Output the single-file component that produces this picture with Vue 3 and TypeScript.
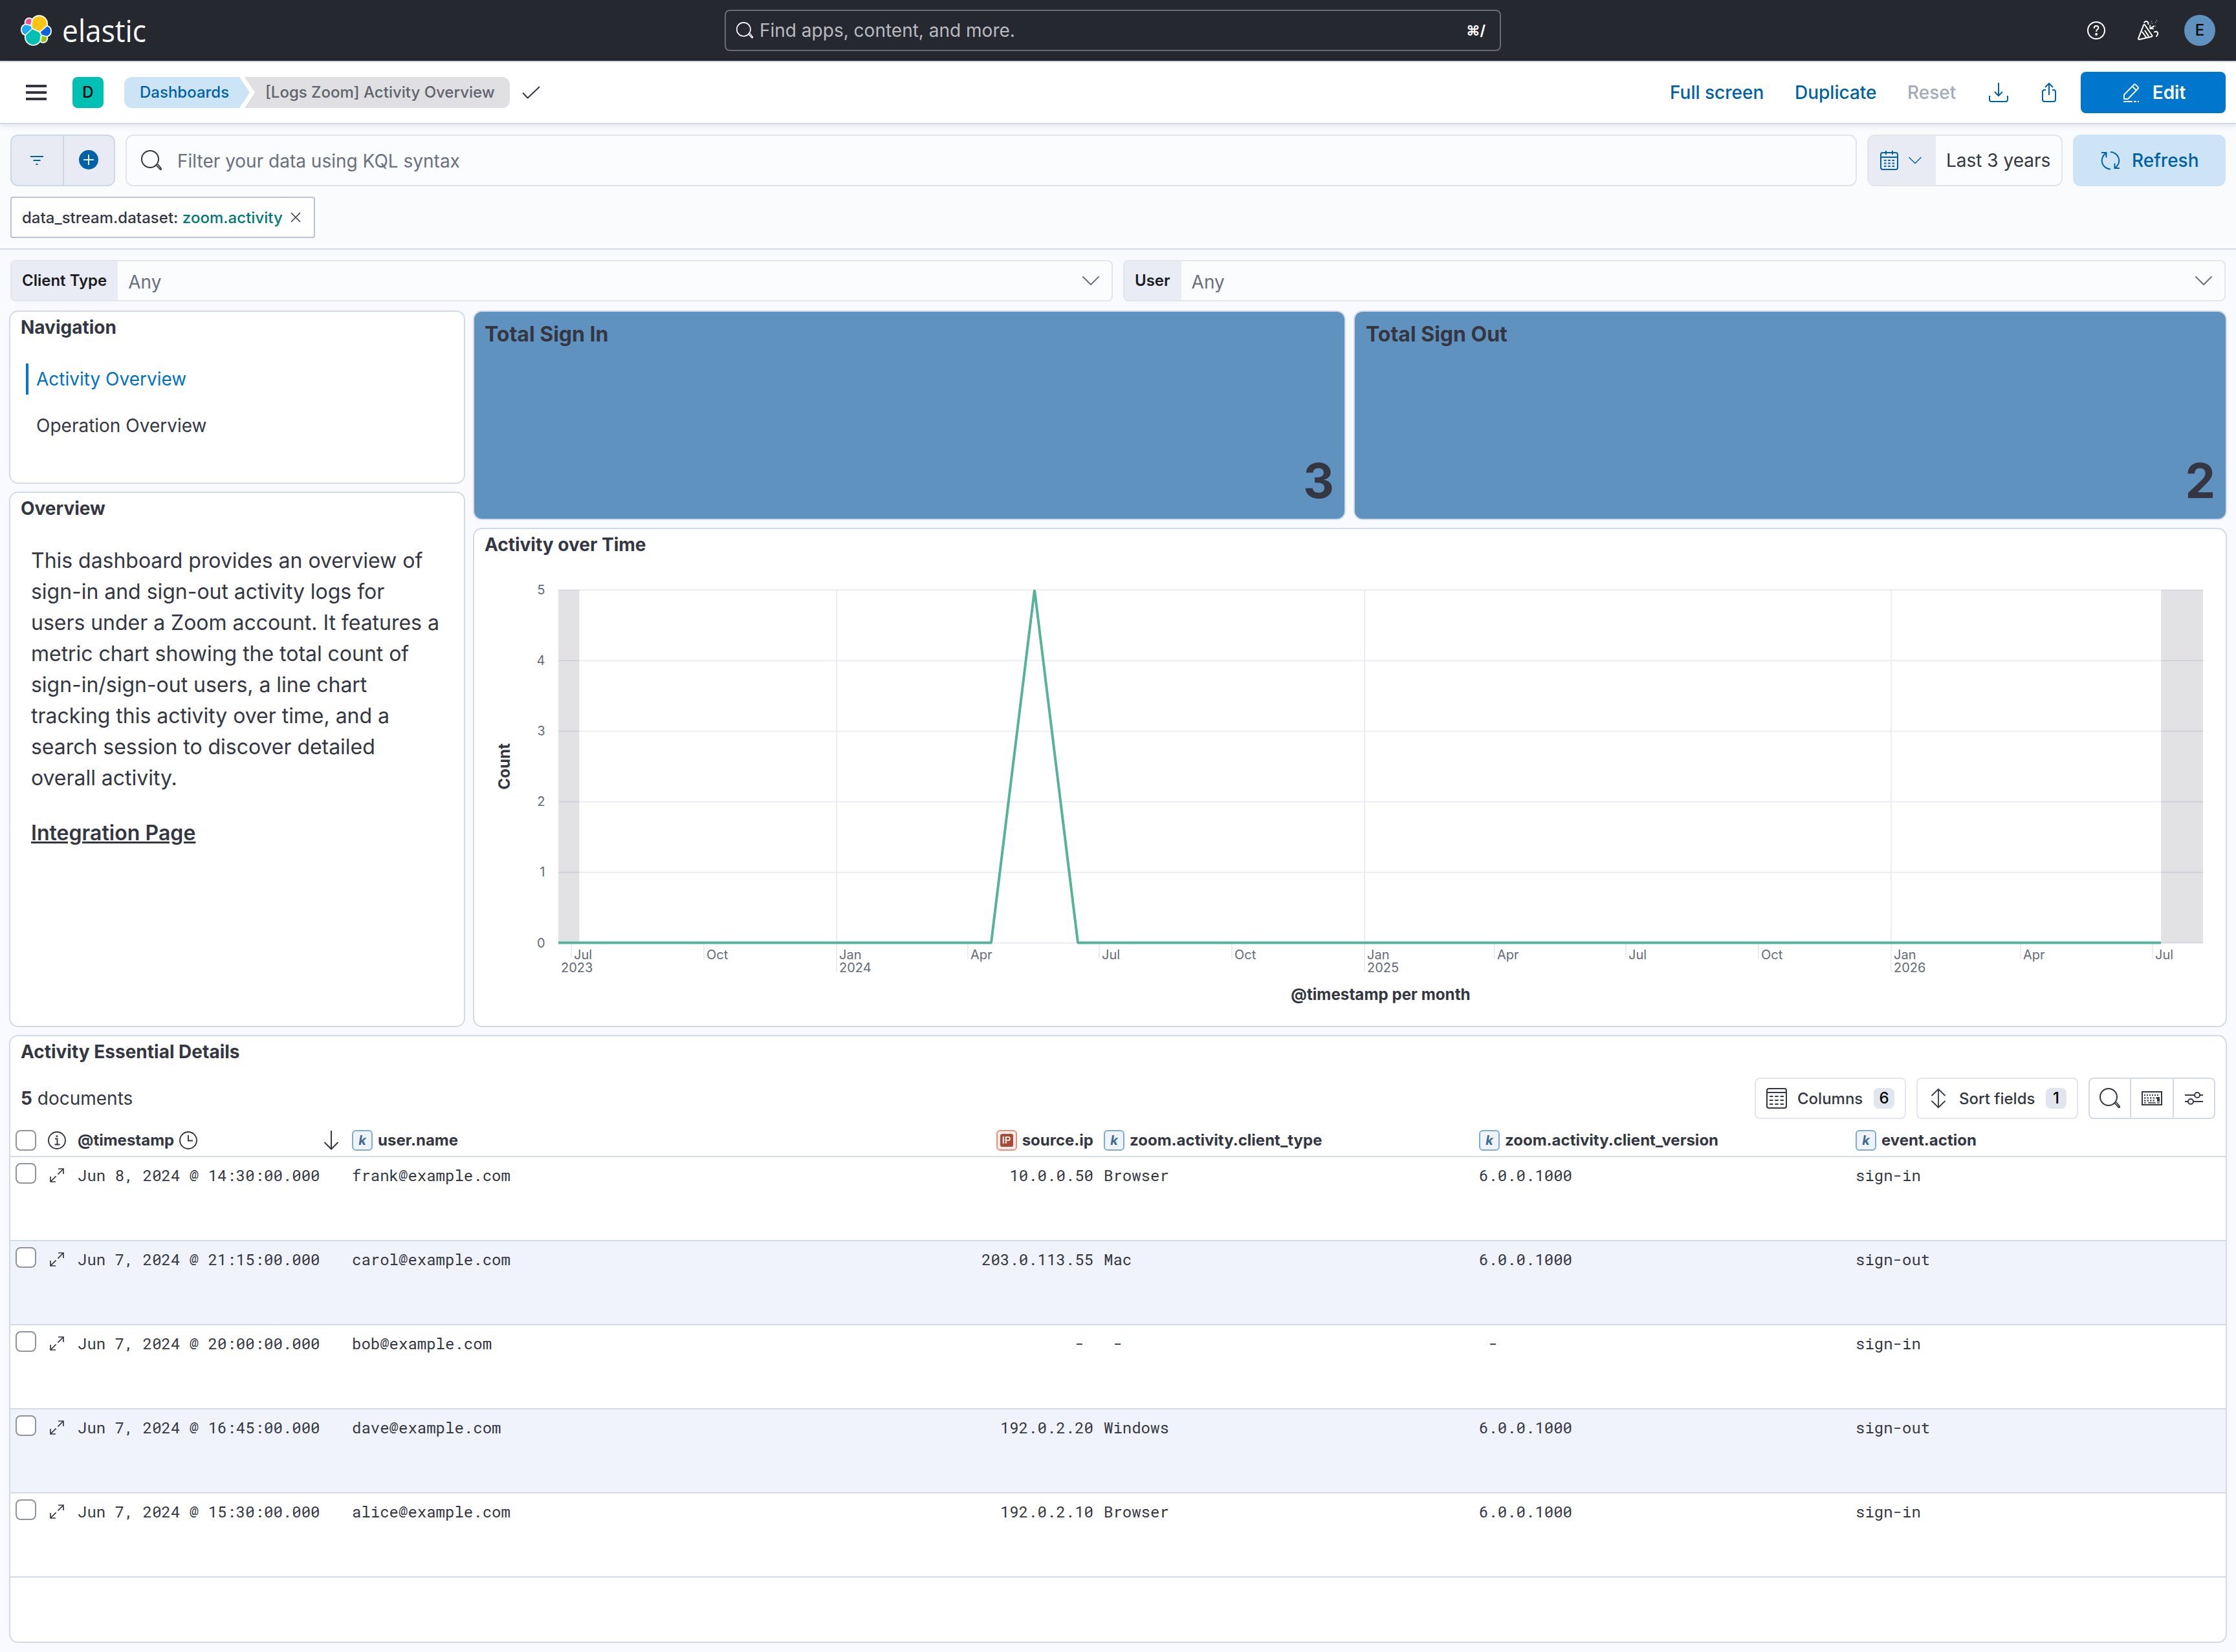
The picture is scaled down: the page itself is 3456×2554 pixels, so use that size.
<script setup lang="ts">
interface LogRow {
  timestamp: string
  user: string
  ip: string
  clientType: string
  version: string
  action: string
}

interface Tick {
  x: number
  label: string
  year?: string
  labelX?: number
}

const rows: LogRow[] = [
  { timestamp: 'Jun 8, 2024 @ 14:30:00.000', user: 'frank@example.com', ip: '10.0.0.50', clientType: 'Browser', version: '6.0.0.1000', action: 'sign-in' },
  { timestamp: 'Jun 7, 2024 @ 21:15:00.000', user: 'carol@example.com', ip: '203.0.113.55', clientType: 'Mac', version: '6.0.0.1000', action: 'sign-out' },
  { timestamp: 'Jun 7, 2024 @ 20:00:00.000', user: 'bob@example.com', ip: ' - ', clientType: ' - ', version: ' - ', action: 'sign-in' },
  { timestamp: 'Jun 7, 2024 @ 16:45:00.000', user: 'dave@example.com', ip: '192.0.2.20', clientType: 'Windows', version: '6.0.0.1000', action: 'sign-out' },
  { timestamp: 'Jun 7, 2024 @ 15:30:00.000', user: 'alice@example.com', ip: '192.0.2.10', clientType: 'Browser', version: '6.0.0.1000', action: 'sign-in' },
]

const ticks: Tick[] = [
  { x: 883, label: 'Jul', year: '2023', labelX: 867 },
  { x: 1088, label: 'Oct' },
  { x: 1293, label: 'Jan', year: '2024' },
  { x: 1496, label: 'Apr' },
  { x: 1699, label: 'Jul' },
  { x: 1904, label: 'Oct' },
  { x: 2109, label: 'Jan', year: '2025' },
  { x: 2310, label: 'Apr' },
  { x: 2513, label: 'Jul' },
  { x: 2718, label: 'Oct' },
  { x: 2923, label: 'Jan', year: '2026' },
  { x: 3123, label: 'Apr' },
  { x: 3327, label: 'Jul' },
]

const counts = [0, 1, 2, 3, 4, 5]
const countY = (n: number): number => 1458 - n * 109.2
</script>

<template>
  <div class="app">
    <svg class="defs" width="0" height="0">
      <defs>
        <symbol id="i-search" viewBox="0 0 32 32">
          <circle cx="14" cy="14" r="13" fill="none" stroke="currentColor" stroke-width="2" />
          <path d="M23.2 23.2l6.3 6.6a1 1 0 0 0 1.5-1.5l-5.2-6.6" fill="none" stroke="currentColor" stroke-width="1.8" />
        </symbol>
        <symbol id="i-down" viewBox="0 0 32 32">
          <path d="M4 10l12 12L28 10" fill="none" stroke="currentColor" stroke-width="2" stroke-linecap="round" stroke-linejoin="round" />
        </symbol>
        <symbol id="i-expand" viewBox="0 0 24 24">
          <path d="M14 2h8v8M22 2l-8.600 8.600M10 22H2v-8M2 22l8.600-8.600" fill="none" stroke="currentColor" stroke-width="1.700" />
        </symbol>
      </defs>
    </svg>

    <header class="top">
      <div class="brand">
        <svg class="logo" viewBox="0 0 32 32">
          <g stroke="#fff" stroke-width="2.500" stroke-linejoin="round" fill="#fff">
            <path d="M12.580 13.787l7.002 3.211 7.066-6.213a7.849 7.849 0 0 0 .152-1.557c0-4.287-3.465-7.774-7.724-7.774a7.710 7.710 0 0 0-6.373 3.380l-1.176 6.126z" />
            <path d="M5.333 21.228A8.030 8.030 0 0 0 5.180 22.800c0 4.302 3.476 7.800 7.749 7.800 2.571 0 4.976-1.279 6.417-3.422l1.166-6.102-1.556-2.993-7.030-3.221z" />
            <path d="M5.288 9.067l4.800 1.140L11.140 4.724a3.785 3.785 0 0 0-2.295-.775 3.800 3.800 0 0 0-3.780 3.813c0 .450.077.888.223 1.305z" />
            <path d="M4.872 10.214c-2.143.713-3.598 2.789-3.598 5.060 0 2.211 1.360 4.185 3.400 4.967l6.735-6.120-1.236-2.658z" />
            <path d="M20.873 27.178a3.764 3.764 0 0 0 2.288.781 3.800 3.800 0 0 0 3.780-3.813c0-.450-.077-.888-.223-1.304l-4.795-1.128z" />
            <path d="M21.848 20.563l5.280 1.242c2.144-.713 3.599-2.789 3.599-5.060a5.325 5.325 0 0 0-3.400-4.956l-6.905 6.086z" />
          </g>
          <path fill="#FEC514" d="M12.580 13.787l7.002 3.211 7.066-6.213a7.849 7.849 0 0 0 .152-1.557c0-4.287-3.465-7.774-7.724-7.774a7.710 7.710 0 0 0-6.373 3.380l-1.176 6.126z" />
          <path fill="#00BFB3" d="M5.333 21.228A8.030 8.030 0 0 0 5.180 22.800c0 4.302 3.476 7.800 7.749 7.800 2.571 0 4.976-1.279 6.417-3.422l1.166-6.102-1.556-2.993-7.030-3.221z" />
          <path fill="#F04E98" d="M5.288 9.067l4.800 1.140L11.140 4.724a3.785 3.785 0 0 0-2.295-.775 3.800 3.800 0 0 0-3.780 3.813c0 .450.077.888.223 1.305z" />
          <path fill="#1BA9F5" d="M4.872 10.214c-2.143.713-3.598 2.789-3.598 5.060 0 2.211 1.360 4.185 3.400 4.967l6.735-6.120-1.236-2.658z" />
          <path fill="#93C90E" d="M20.873 27.178a3.764 3.764 0 0 0 2.288.781 3.800 3.800 0 0 0 3.780-3.813c0-.450-.077-.888-.223-1.304l-4.795-1.128z" />
          <path fill="#0B64DD" d="M21.848 20.563l5.280 1.242c2.144-.713 3.599-2.789 3.599-5.060a5.325 5.325 0 0 0-3.400-4.956l-6.905 6.086z" />
        </svg>
        <svg class="wordmark" viewBox="0 0 140 94">
          <text x="0" y="65" textLength="130" lengthAdjust="spacingAndGlyphs" font-family="'Open Sans', sans-serif" font-size="47" fill="#fff">elastic</text>
        </svg>
      </div>
      <div class="search">
        <svg class="s-ico"><use href="#i-search" /></svg>
        <span class="s-ph">Find apps, content, and more.</span>
        <span class="s-key">⌘/</span>
      </div>
      <div class="top-right">
        <svg class="help" viewBox="0 0 32 32" fill="none" stroke="#fff" stroke-width="2">
          <circle cx="16" cy="16" r="13" />
          <path d="M12.800 13v-.800c0-2 1.400-3.200 3.300-3.200s3.300 1.200 3.300 3c0 2.600-3.300 2.600-3.300 5.400v.600" />
          <circle cx="16.100" cy="22" r="1" fill="#fff" />
        </svg>
        <svg class="party" viewBox="0 0 32 32" fill="none" stroke="#fff" stroke-width="2" stroke-linecap="round" stroke-linejoin="round">
          <path d="M9.200 7.600L1.200 28.200q-.500 1.800 1.500 1.800l18.600-4.300q2-.800.700-2.200L11.300 7.800q-1.200-1.400-2.100-.200z" />
          <path d="M7.200 18.500l5.800 8M11.400 16.500l5.400 8.500" />
          <path d="M10.200 3.800q1.300-2.200 3.400-1.800 3.400 1 2.800 4.400" />
          <path d="M19.200 8.500v4.800h5M19.800 12.600l5.500-3.200" stroke-width="1.800" />
          <path d="M26 18.500q3.200-1.600 4.800.600 1.200 3-1.800 6" />
          <path d="M21.500 2.200v.1M27.500 3.500v.1M29.500 1v.1M27.800 9.200v.1M22.300 5.200v.1" stroke-width="1.500" opacity="0.700" />
        </svg>
        <span class="avatar">E</span>
      </div>
    </header>

    <nav class="bar">
      <svg class="burger" viewBox="0 0 32 24"><path d="M0 0h32v4H0zM0 10h32v4H0zM0 20h32v4H0z" fill="#343741" /></svg>
      <span class="space">D</span>
      <div class="crumbs">
        <span class="crumb first">Dashboards</span>
        <span class="crumb last">[Logs Zoom] Activity Overview</span>
      </div>
      <svg class="check" viewBox="0 0 32 32"><path d="M3.500 17l7 7.500L28.500 7.500" fill="none" stroke="#343741" stroke-width="2" stroke-linecap="round" stroke-linejoin="round" /></svg>
      <div class="actions">
        <span class="act a1">Full screen</span>
        <span class="act a2">Duplicate</span>
        <span class="act a3">Reset</span>
        <svg class="dl" viewBox="0 0 32 32" fill="none" stroke="#0061a6" stroke-width="2">
          <path d="M16 1v20M10 15l6 6 6-6M2 21v6q0 3 3 3h22q3 0 3-3v-6" />
        </svg>
        <svg class="share" viewBox="0 0 32 32" fill="none" stroke="#0061a6" stroke-width="2">
          <path d="M16 20V2M10 8l6-6 6 6M11 12H9q-3 0-3 3v12q0 3 3 3h14q3 0 3-3V15q0-3-3-3h-2" />
        </svg>
        <span class="edit">
          <svg viewBox="0 0 32 32" fill="none" stroke="#fff" stroke-width="1.900">
            <path d="M5 26v-6.500L20.300 3.800q1.200-1 2.400 0l3.800 3.800q1 1.200 0 2.400L11 26z" stroke-linejoin="round" />
            <path d="M17.800 6.500l6.200 6.200" />
            <path d="M4 30h14M20 30h4M26 30h2" stroke-width="2" />
          </svg>
          Edit
        </span>
      </div>
    </nav>

    <section class="query">
      <div class="q-row">
        <div class="filters">
          <span class="f-btn"><svg viewBox="0 0 32 32"><path d="M6 11h20M10.500 17h11M14.500 23h3" stroke="#0061a6" stroke-width="2.200" /></svg></span>
          <span class="f-btn"><svg viewBox="0 0 32 32"><circle cx="16" cy="16" r="15" fill="#0061a6" /><path d="M16 8v16M8 16h16" stroke="#e9ebf4" stroke-width="2" /></svg></span>
        </div>
        <div class="kql">
          <svg class="k-ico"><use href="#i-search" /></svg>
          <span>Filter your data using KQL syntax</span>
        </div>
        <div class="date">
          <div class="cal">
            <svg viewBox="0 0 32 32" fill="none" stroke="#0061a6" stroke-width="2">
              <rect x="3" y="4" width="26" height="26" rx="3" /><path d="M3 11h26M11 1v6M21 1v6" />
              <path d="M8 16h16M8 20.500h16M8 25h16" stroke-dasharray="3.500 2.750" stroke-width="2.200" />
            </svg>
            <svg class="cv"><use href="#i-down" /></svg>
          </div>
          <span class="d-text">Last 3 years</span>
        </div>
        <div class="refresh">
          <svg viewBox="0 0 32 32" fill="none" stroke="#0061a6" stroke-width="2">
            <path d="M16 29.500A13.300 13.300 0 0 1 8.300 5.400M2 4h7.500v7.500M16 3A13.300 13.300 0 0 1 23.800 27M30 28h-7.500v-7.500" />
          </svg>
          <span>Refresh</span>
        </div>
      </div>
      <div class="pill">
        <span>data_stream.dataset: <b>zoom.activity</b></span>
        <svg viewBox="0 0 16 16"><path d="M1 1l14 14M15 1L1 15" stroke="#343741" stroke-width="1.500" /></svg>
      </div>
    </section>

    <section class="controls">
      <div class="control">
        <span class="c-label">Client Type</span><span class="c-any">Any</span>
        <svg><use href="#i-down" /></svg>
      </div>
      <div class="control">
        <span class="c-label">User</span><span class="c-any">Any</span>
        <svg><use href="#i-down" /></svg>
      </div>
    </section>

    <main class="board">
      <div class="left">
        <article class="panel nav-panel">
          <h2>Navigation</h2>
          <a class="link active">Activity Overview</a>
          <a class="link">Operation Overview</a>
        </article>
        <article class="panel overview">
          <h2>Overview</h2>
          <p>This dashboard provides an overview of<br />sign-in and sign-out activity logs for<br />users under a Zoom account. It features a<br />metric chart showing the total count of<br />sign-in/sign-out users, a line chart<br />tracking this activity over time, and a<br />search session to discover detailed<br />overall activity.</p>
          <a class="integration">Integration Page</a>
        </article>
      </div>

      <article class="panel metric">
        <h3>Total Sign In</h3>
        <strong>3</strong>
      </article>
      <article class="panel metric">
        <h3>Total Sign Out</h3>
        <strong>2</strong>
      </article>

      <article class="panel chart">
        <h2>Activity over Time</h2>
        <svg class="plot" viewBox="733 880 2707 706">
          <g stroke="#eaedf3" stroke-width="2">
            <line v-for="n in counts" :key="n" x1="863" x2="3405" :y1="countY(n)" :y2="countY(n)" />
            <template v-for="t in ticks" :key="t.x">
              <line :x1="t.x" :x2="t.x" :y1="t.year && !t.labelX ? 912 : 1458" :y2="t.year && !t.labelX ? 1502 : 1482" />
            </template>
          </g>
          <rect x="863" y="912" width="32.500" height="546" fill="#3a3f52" opacity="0.150" />
          <rect x="3340" y="912" width="65" height="546" fill="#3a3f52" opacity="0.150" />
          <polyline points="863,1457.500 1532,1457.500 1599,912 1666,1457.500 3340,1457.500" fill="none" stroke="#54b399" stroke-width="4" stroke-linejoin="bevel" />
          <g font-size="20" fill="#646a77">
            <text v-for="n in counts" :key="n" x="842.500" :y="countY(n) + 6.500" text-anchor="end">{{ n }}</text>
            <template v-for="t in ticks" :key="t.x">
              <text :x="t.x + 4" y="1482.500">{{ t.label }}</text>
              <text v-if="t.year" :x="t.labelX ?? t.x + 4" y="1502.500">{{ t.year }}</text>
            </template>
          </g>
          <g font-size="24.200" font-weight="700" fill="#343741" text-anchor="middle">
            <text transform="translate(788 1185) rotate(-90)">Count</text>
            <text x="2134" y="1545.500">@timestamp per month</text>
          </g>
        </svg>
      </article>

      <article class="panel details">
        <h2>Activity Essential Details</h2>
        <div class="tools">
          <span class="docs"><b>5</b> documents</span>
          <span class="btn cols">
            <svg viewBox="0 0 32 32" fill="none" stroke="#343741" stroke-width="2">
              <rect x="1" y="1" width="30" height="30" rx="3" /><path d="M1 7h30" />
              <path d="M5 13h22M5 19h22M5 25h22" stroke-dasharray="5.500 2.750" />
            </svg>
            <span>Columns</span><i>6</i>
          </span>
          <span class="btn sort">
            <svg viewBox="0 0 32 32" fill="none" stroke="#343741" stroke-width="1.800">
              <path d="M16 2v28M5.500 12L16 1.800 26.500 12M5.500 20L16 30.200 26.500 20" />
            </svg>
            <span>Sort fields</span><i>1</i>
          </span>
          <span class="group">
            <span><svg><use href="#i-search" /></svg></span>
            <span>
              <svg viewBox="0 0 32 32" fill="none" stroke="#343741" stroke-width="2">
                <rect x="1" y="6" width="30" height="20" /><path d="M4 11h24" stroke-dasharray="2 2" /><path d="M4 15.500h20" stroke-dasharray="2.500 2" /><path d="M4 19.500h18" stroke-dasharray="2.500 2" /><path d="M26 14v7" stroke-width="4" /><path d="M4 23h3M10 23h12M24 23h4" stroke-width="1.500" />
              </svg>
            </span>
            <span>
              <svg viewBox="0 0 32 32" fill="none" stroke="#343741" stroke-width="2">
                <path d="M2 11h15M25 11h5M2 21h5M15 21h15" /><circle cx="21" cy="11" r="4" /><circle cx="11" cy="21" r="4" />
              </svg>
            </span>
          </span>
        </div>
        <div class="row head">
          <span class="box"></span>
          <svg class="info" viewBox="0 0 28 28" fill="none" stroke="#343741" stroke-width="1.900"><circle cx="14" cy="14" r="13" /><path d="M11 11.500h3.500V20M10.500 20.500h8" /><circle cx="14" cy="7.500" r=".6" /></svg>
          <span class="cell ts">@timestamp
            <svg viewBox="0 0 28 28" fill="none" stroke="#343741" stroke-width="1.900"><circle cx="14" cy="14" r="13" /><path d="M14 6v8.500h7" /></svg>
            <svg class="arrow" viewBox="0 0 24 30" fill="none" stroke="#343741" stroke-width="2"><path d="M12 0v28M1.500 18L12 28.500 22.500 18" /></svg>
          </span>
          <span class="cell"><em>k</em>user.name</span>
          <span class="cell ip"><em class="red"><u>IP</u></em>source.ip</span>
          <span class="cell"><em>k</em>zoom.activity.client_type</span>
          <span class="cell"><em>k</em>zoom.activity.client_version</span>
          <span class="cell"><em>k</em>event.action</span>
        </div>
        <div v-for="row in rows" :key="row.timestamp" class="row data">
          <span class="box"></span>
          <svg class="exp"><use href="#i-expand" /></svg>
          <span class="val">{{ row.timestamp }}</span>
          <span class="val">{{ row.user }}</span>
          <span class="val ip">{{ row.ip }}</span>
          <span class="val">{{ row.clientType }}</span>
          <span class="val">{{ row.version }}</span>
          <span class="val">{{ row.action }}</span>
        </div>
      </article>
    </main>
  </div>
</template>

<style>
body {
  background: #f8faff;
}
</style>

<style scoped>
.app,
.app * {
  box-sizing: border-box;
}
.app {
  width: 3456px;
  height: 2554px;
  overflow: hidden;
  font-family: Inter, 'Liberation Sans', sans-serif;
  font-size: 28px;
  color: #343741;
  background: #f8faff;
  white-space: nowrap;
}
.defs {
  display: block;
}
svg {
  flex: none;
}

/* top header */
.top {
  display: grid;
  grid-template-columns: 1120px 1200px 1fr;
  align-items: center;
  height: 96px;
  background: #25282f;
  border-bottom: 2px solid #d3dae6;
}
.brand {
  display: flex;
  align-items: center;
  padding-left: 32px;
}
.logo {
  width: 48px;
  height: 48px;
}
.wordmark {
  width: 140px;
  height: 94px;
  margin-left: 16px;
}
.search {
  display: flex;
  align-items: center;
  height: 64px;
  padding: 0 22px 0 16px;
  border: 2px solid #6a6c72;
  border-radius: 8px;
  color: #b9bbc0;
}
.s-ico {
  width: 26px;
  height: 26px;
  color: #fff;
}
.s-ph {
  flex: 1;
  margin-left: 10px;
}
.s-key {
  font-size: 22px;
  font-weight: 700;
  color: #fff;
}
.top-right {
  display: flex;
  align-items: center;
  justify-content: flex-end;
  padding-right: 32px;
}
.help {
  width: 32px;
  height: 32px;
}
.party {
  width: 32px;
  height: 32px;
  margin: 0 40px 0 48px;
}
.avatar {
  width: 48px;
  height: 48px;
  border-radius: 50%;
  background: #6092c0;
  color: #000;
  font-size: 24px;
  font-weight: 500;
  line-height: 48px;
  text-align: center;
}

/* navigation bar */
.bar {
  position: relative;
  display: flex;
  align-items: center;
  height: 96px;
  padding: 0 16px 0 40px;
  background: #fff;
  border-bottom: 2px solid #d3dae6;
  box-shadow: 0 2px 8px rgba(60, 70, 90, 0.14);
}
.burger {
  width: 32px;
  height: 24px;
}
.space {
  width: 48px;
  height: 48px;
  margin-left: 40px;
  border-radius: 8px;
  background: #00bfb3;
  color: #000;
  font-size: 24px;
  font-weight: 500;
  line-height: 48px;
  text-align: center;
}
.crumbs {
  display: flex;
  margin-left: 32px;
}
.crumb {
  height: 48px;
  font-size: 24px;
  font-weight: 500;
  line-height: 48px;
}
.first {
  width: 194px;
  padding-left: 24px;
  border-radius: 12px 0 0 12px;
  background: #cce4f5;
  color: #0061a6;
  clip-path: polygon(0 0, 178px 0, 100% 50%, 178px 100%, 0 100%);
}
.last {
  width: 410px;
  margin-left: -8px;
  padding-left: 32px;
  border-radius: 0 12px 12px 0;
  background: #e0e0e3;
  color: #5f636d;
  clip-path: polygon(0 0, 100% 0, 100% 100%, 0 100%, 16px 50%);
}
.check {
  width: 32px;
  height: 32px;
  margin-left: 17px;
}
.actions {
  display: flex;
  flex: 1;
  align-items: center;
  justify-content: flex-end;
}
.act {
  font-weight: 500;
  color: #0061a6;
}
.a1 {
  width: 193px;
}
.a2 {
  width: 174px;
}
.a3 {
  width: 125px;
  color: #a2abba;
}
.dl {
  width: 32px;
  height: 32px;
}
.share {
  width: 32px;
  height: 32px;
  margin: 0 33px 0 46px;
}
.edit {
  display: flex;
  align-items: center;
  justify-content: center;
  gap: 17px;
  width: 224px;
  height: 64px;
  border-radius: 8px;
  background: #0077cc;
  color: #fff;
  font-weight: 600;
}
.edit svg {
  width: 32px;
  height: 32px;
}

/* query bar */
.query {
  height: 194px;
  padding: 16px 16px 0;
  background: #fafbfd;
  border-bottom: 2px solid #d3dae6;
}
.q-row {
  display: flex;
  height: 80px;
}
.filters {
  display: grid;
  grid-template-columns: 79px 1fr;
  width: 162px;
  border: 2px solid #d0d8e8;
  border-radius: 12px;
  background: #e9ebf4;
}
.f-btn {
  display: flex;
  align-items: center;
  justify-content: center;
  padding-right: 2px;
}
.f-btn + .f-btn {
  border-left: 2px solid #d0d8e8;
}
.f-btn svg {
  width: 32px;
  height: 32px;
  margin-top: -2px;
}
.kql {
  display: flex;
  align-items: center;
  width: 2676px;
  margin-left: 16px;
  padding-left: 22px;
  border: 2px solid #e3e5e9;
  border-radius: 12px;
  background: #fbfcfd;
  color: #69707d;
}
.kql span {
  margin-top: 2px;
}
.k-ico {
  width: 32px;
  height: 32px;
  margin-right: 24px;
  color: #343741;
}
.date {
  display: flex;
  width: 302px;
  margin-left: 16px;
  border: 2px solid #e3e5e9;
  border-radius: 12px;
  background: #fbfcfd;
  overflow: hidden;
}
.cal {
  display: flex;
  align-items: center;
  width: 104px;
  padding-left: 16px;
  background: #e9ebf4;
}
.cal svg {
  width: 32px;
  height: 32px;
}
.cal .cv {
  width: 24px;
  height: 24px;
  margin-left: 12px;
  color: #0061a6;
}
.d-text {
  padding-left: 16px;
  line-height: 76px;
}
.refresh {
  display: flex;
  align-items: center;
  width: 236px;
  margin-left: 16px;
  padding-left: 42px;
  border-radius: 12px;
  background: #cce4f5;
  color: #0061a6;
  font-weight: 500;
}
.refresh svg {
  width: 32px;
  height: 32px;
  margin-right: 17px;
}
.pill {
  display: flex;
  align-items: center;
  width: 471px;
  height: 64px;
  margin-top: 16px;
  padding-left: 16px;
  border: 2px solid #bcc4d3;
  border-radius: 4px;
  background: #fff;
  font-size: 24px;
  font-weight: 500;
  letter-spacing: 0.03px;
}
.pill span {
  width: 415px;
}
.pill b {
  font-weight: 500;
  color: #007871;
}
.pill svg {
  width: 16px;
  height: 16px;
}

/* controls */
.controls {
  display: flex;
  gap: 16px;
  padding: 16px 16px 14px;
}
.control {
  display: flex;
  align-items: center;
  flex: 1;
  height: 64px;
  padding-right: 16px;
  border: 2px solid #e3e6ea;
  border-radius: 8px;
  background: #fbfcfd;
  overflow: hidden;
}
.c-label {
  height: 60px;
  padding: 0 17px 0 16px;
  background: #e9ecf4;
  color: #1a1c21;
  font-size: 24px;
  font-weight: 600;
  line-height: 60px;
}
.c-any {
  flex: 1;
  margin-top: 4px;
  padding-left: 16px;
  color: #69707d;
}
.control svg {
  width: 32px;
  height: 32px;
  color: #69707d;
}

/* dashboard */
.board {
  display: grid;
  grid-template-columns: 705px 1349px 1350px;
  grid-template-rows: 324px 772px 940px;
  gap: 12px;
  padding-left: 14px;
}
.left {
  display: grid;
  grid-row: 1 / 3;
  grid-template-rows: 268px 828px;
  gap: 12px;
}
.panel {
  border: 2px solid #d3dbe8;
  border-radius: 14px;
  background: #fff;
  overflow: hidden;
}
h2 {
  margin: 0;
  padding-left: 16px;
  font-size: 28px;
  font-weight: 700;
  line-height: 49px;
  height: 48px;
}
.link {
  display: block;
  height: 48px;
  margin: 32px 0 0 24px;
  padding-left: 12px;
  border-left: 4px solid transparent;
  line-height: 49px;
}
.link + .link {
  margin-top: 24px;
}
.active {
  border-color: #0077cc;
  color: #0071c2;
}
.overview p {
  margin: 33px 0 0 32px;
  font-size: 32px;
  letter-spacing: -0.03px;
  line-height: 48px;
}
.integration {
  display: block;
  margin: 37px 0 0 32px;
  font-size: 32px;
  font-weight: 600;
  letter-spacing: 0.05px;
  line-height: 48px;
  text-decoration: underline;
}
.metric {
  display: flex;
  flex-direction: column;
  justify-content: space-between;
  background: #6092c0;
}
h3 {
  margin: 15px 0 0 16px;
  font-size: 32px;
  font-weight: 700;
  line-height: 40px;
}
.metric + .metric h3 {
  margin-left: 17px;
}
.metric strong {
  padding: 0 16px 18px 0;
  font-size: 74px;
  font-weight: 700;
  line-height: 82px;
  text-align: right;
}
.chart {
  grid-column: 2 / 4;
}
.chart h2 {
  height: 62px;
}
.plot {
  display: block;
  width: 2707px;
  height: 706px;
}
.details {
  grid-column: 1 / 4;
}

/* table toolbar */
.tools {
  display: flex;
  align-items: center;
  height: 64px;
  margin-top: 16px;
  padding: 0 16px 0 16px;
}
.docs {
  flex: 1;
}
.docs b {
  font-weight: 700;
}
.btn {
  display: flex;
  align-items: center;
  height: 64px;
  padding-left: 16px;
  border: 2px solid #e3e6f1;
  border-radius: 8px;
  font-size: 24px;
  font-weight: 500;
}
.btn svg {
  width: 32px;
  height: 32px;
  margin-right: 16px;
}
.btn span {
  flex: 1;
}
.btn i {
  width: 32px;
  height: 32px;
  margin-right: 16px;
  border-radius: 8px;
  background: #e0e5ee;
  color: #000;
  font-style: normal;
  line-height: 32px;
  text-align: center;
}
.cols {
  width: 234px;
}
.sort {
  width: 250px;
  margin: 0 16px;
}
.group {
  display: grid;
  grid-template-columns: 62px 66px 1fr;
  width: 196px;
  height: 64px;
  border: 2px solid #d3dbe8;
  border-radius: 8px;
}
.group > span {
  display: flex;
  align-items: center;
  justify-content: center;
}
.group > span + span {
  border-left: 2px solid #d3dbe8;
}
.group svg {
  width: 32px;
  height: 32px;
}

/* table */
.row {
  display: grid;
  grid-template-columns: 50px 46px 424px 800px 362px 580px 582px 1fr;
  padding-left: 8px;
  border-bottom: 2px solid #d3dbe8;
}
.head {
  align-items: center;
  height: 59px;
  padding-top: 8px;
}
.box {
  width: 32px;
  height: 32px;
  border: 2px solid #8f939b;
  border-radius: 8px;
  background: #fff;
}
.info {
  width: 28px;
  height: 28px;
}
.cell {
  display: flex;
  align-items: center;
  height: 32px;
  font-size: 24px;
  font-weight: 700;
}
.cell em {
  display: flex;
  align-items: center;
  justify-content: center;
  width: 32px;
  height: 32px;
  margin-right: 8px;
  border: 2px solid #7dabd6;
  border-radius: 6px;
  background: #eff4f9;
  color: #3f6a94;
  font-size: 20px;
  font-weight: 700;
  font-style: italic;
}
.cell .red {
  border-color: #ef8d79;
  background: #fdeeea;
}
.red u {
  width: 20px;
  height: 20px;
  border-radius: 3px;
  background: #aa4a38;
  color: #fff;
  font-size: 15px;
  font-style: normal;
  font-weight: 500;
  line-height: 20px;
  text-align: center;
  text-decoration: none;
}
.ts svg {
  width: 28px;
  height: 28px;
  margin-left: 8px;
}
.ts .arrow {
  width: 24px;
  height: 30px;
  margin: 0 20px 0 auto;
}
.ip {
  justify-content: flex-end;
  padding-right: 16px;
  text-align: right;
}
.data {
  height: 130px;
  padding-top: 9px;
}
.data:nth-child(odd) {
  background: #f0f3fc;
}
.exp {
  width: 24px;
  height: 24px;
  margin: 7px 0 0 2px;
}
.val {
  padding-top: 1px;
  font-family: 'Roboto Mono', 'DejaVu Sans Mono', 'Liberation Mono', monospace;
  font-size: 24px;
  line-height: 36px;
  white-space: pre;
}
.val.ip {
  padding-right: 16px;
}
</style>
